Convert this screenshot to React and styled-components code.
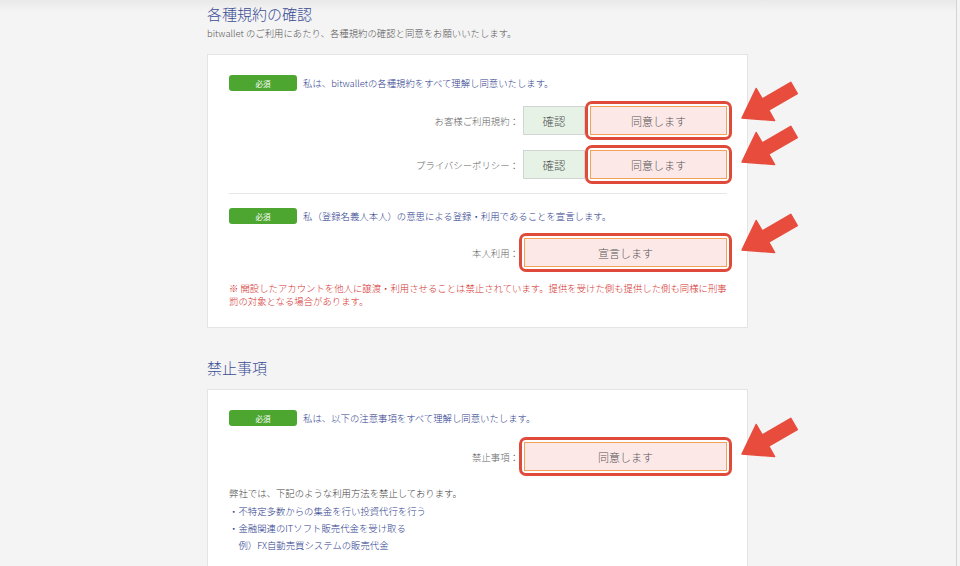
import React from "react";
import styled, { createGlobalStyle } from "styled-components";

const Global = createGlobalStyle`
  html, body { margin: 0; padding: 0; background: #f4f4f4; }
  body { font-family: "Noto Sans CJK JP", "Noto Sans", sans-serif; overflow: hidden; }
`;

const Frame = styled.div`
  width: 957px;
  height: 566px;
  overflow: hidden;
  box-sizing: border-box;
  border-right: 1px solid #d4d4d4;
  background: linear-gradient(#e9e9e9 0px, #f4f4f4 12px, #f4f4f4 100%);
`;

const Column = styled.div`
  margin-left: 207px;
  width: 541px;
`;

const Heading = styled.h2`
  margin: ${(p) => p.$top}px 0 0 0;
  font-size: 15px;
  line-height: 20px;
  font-weight: 300;
  color: #3b4d93;
`;

const Lead = styled.p`
  margin: 2px 0 0 0;
  font-size: 9.4px;
  line-height: 14px;
  font-weight: 300;
  color: #555;
`;

const Card = styled.section`
  margin-top: ${(p) => p.$top}px;
  background: #fff;
  border: 1px solid #e4e4e4;
  padding: 20px 20px 19px 21px;
`;

const Statement = styled.div`
  display: flex;
  align-items: center;
  gap: 6px;
  height: 16px;
  margin-top: ${(p) => p.$top || 0}px;
`;

const Badge = styled.span`
  width: 68px;
  height: 16px;
  border-radius: 3px;
  background: #4ca62f;
  color: #fff;
  font-size: 7.5px;
  display: flex;
  align-items: center;
  justify-content: center;
`;

const StatementText = styled.span`
  font-size: 9.4px;
  font-weight: 300;
  color: #2c3b8c;
`;

const Row = styled.div`
  position: relative;
  display: flex;
  align-items: center;
  justify-content: flex-end;
  height: 29px;
  margin-top: ${(p) => p.$top}px;
`;

const Label = styled.span`
  font-size: 9.4px;
  font-weight: 300;
  color: #666;
  margin-right: ${(p) => p.$gap}px;
`;

const Confirm = styled.span`
  width: 62px;
  height: 29px;
  box-sizing: border-box;
  background: #e6f2e6;
  border: 1px solid #d2d6d2;
  color: #555;
  font-size: 11.5px;
  font-weight: 300;
  display: flex;
  align-items: center;
  justify-content: center;
  margin-right: 5px;
`;

const Agree = styled.span`
  position: relative;
  width: ${(p) => p.$w}px;
  height: 29px;
  box-sizing: border-box;
  background: #fde8e8;
  border: 1px solid #f3a25a;
  color: #555;
  font-size: 11px;
  font-weight: 300;
  display: flex;
  align-items: center;
  justify-content: center;
  &::after {
    content: "";
    position: absolute;
    inset: -6px;
    border: 3px solid #e04a3a;
    border-radius: 7px;
    pointer-events: none;
  }
`;

const ArrowBox = styled.svg`
  position: absolute;
  left: calc(100% + 10px);
  top: calc(50% - 42px);
  width: 64px;
  height: 46px;
`;

const Arrow = () => (
  <ArrowBox viewBox="0 0 64 46">
    <polygon
      points="5,39 19.2,9.5 25.2,19.9 53.8,3.4 60.3,14.6 31.7,31.1 37.6,41.5"
      fill="#e84c3d"
      stroke="#e84c3d"
      strokeWidth="1.5"
      strokeLinejoin="round"
    />
  </ArrowBox>
);

const Divider = styled.hr`
  margin: 14px 0 0 0;
  border: 0;
  border-top: 1px solid #e6e6e6;
`;

const Notice = styled.p`
  margin: 15px 0 0 0;
  font-size: 9.4px;
  font-weight: 300;
  line-height: 13px;
  color: #d3302c;
`;

const Body = styled.p`
  margin: ${(p) => p.$top || 0}px 0 0 0;
  font-size: 9.4px;
  font-weight: 300;
  line-height: 17px;
  color: ${(p) => (p.$navy ? "#2c3b8c" : "#444")};
  white-space: pre;
`;

export default function App() {
  return (
    <>
      <Global />
      <Frame>
        <Column>
          <Heading $top={4}>各種規約の確認</Heading>
          <Lead>bitwallet のご利用にあたり、各種規約の確認と同意をお願いいたします。</Lead>

          <Card $top={14}>
            <Statement>
              <Badge>必須</Badge>
              <StatementText>私は、bitwalletの各種規約をすべて理解し同意いたします。</StatementText>
            </Statement>
            <Row $top={15}>
              <Label $gap={4}>お客様ご利用規約：</Label>
              <Confirm>確認</Confirm>
              <Agree $w={137}>同意します</Agree>
              <Arrow />
            </Row>
            <Row $top={15}>
              <Label $gap={4}>プライバシーポリシー：</Label>
              <Confirm>確認</Confirm>
              <Agree $w={137}>同意します</Agree>
              <Arrow />
            </Row>
            <Divider />
            <Statement $top={14}>
              <Badge>必須</Badge>
              <StatementText>私（登録名義人本人）の意思による登録・利用であることを宣言します。</StatementText>
            </Statement>
            <Row $top={14}>
              <Label $gap={5}>本人利用：</Label>
              <Agree $w={203}>宣言します</Agree>
              <Arrow />
            </Row>
            <Notice>
              ※ 開設したアカウントを他人に譲渡・利用させることは禁止されています。提供を受けた側も提供した側も同様に刑事罰の対象となる場合があります。
            </Notice>
          </Card>

          <Heading $top={30}>禁止事項</Heading>
          <Card $top={11}>
            <Statement>
              <Badge>必須</Badge>
              <StatementText>私は、以下の注意事項をすべて理解し同意いたします。</StatementText>
            </Statement>
            <Row $top={16}>
              <Label $gap={5}>禁止事項：</Label>
              <Agree $w={203}>同意します</Agree>
              <Arrow />
            </Row>
            <Body $top={14}>弊社では、下記のような利用方法を禁止しております。</Body>
            <Body $navy $top={1}>・不特定多数からの集金を行い投資代行を行う</Body>
            <Body $navy>・金融関連のITソフト販売代金を受け取る</Body>
            <Body $navy>{"　例）FX自動売買システムの販売代金"}</Body>
          </Card>
        </Column>
      </Frame>
    </>
  );
}
